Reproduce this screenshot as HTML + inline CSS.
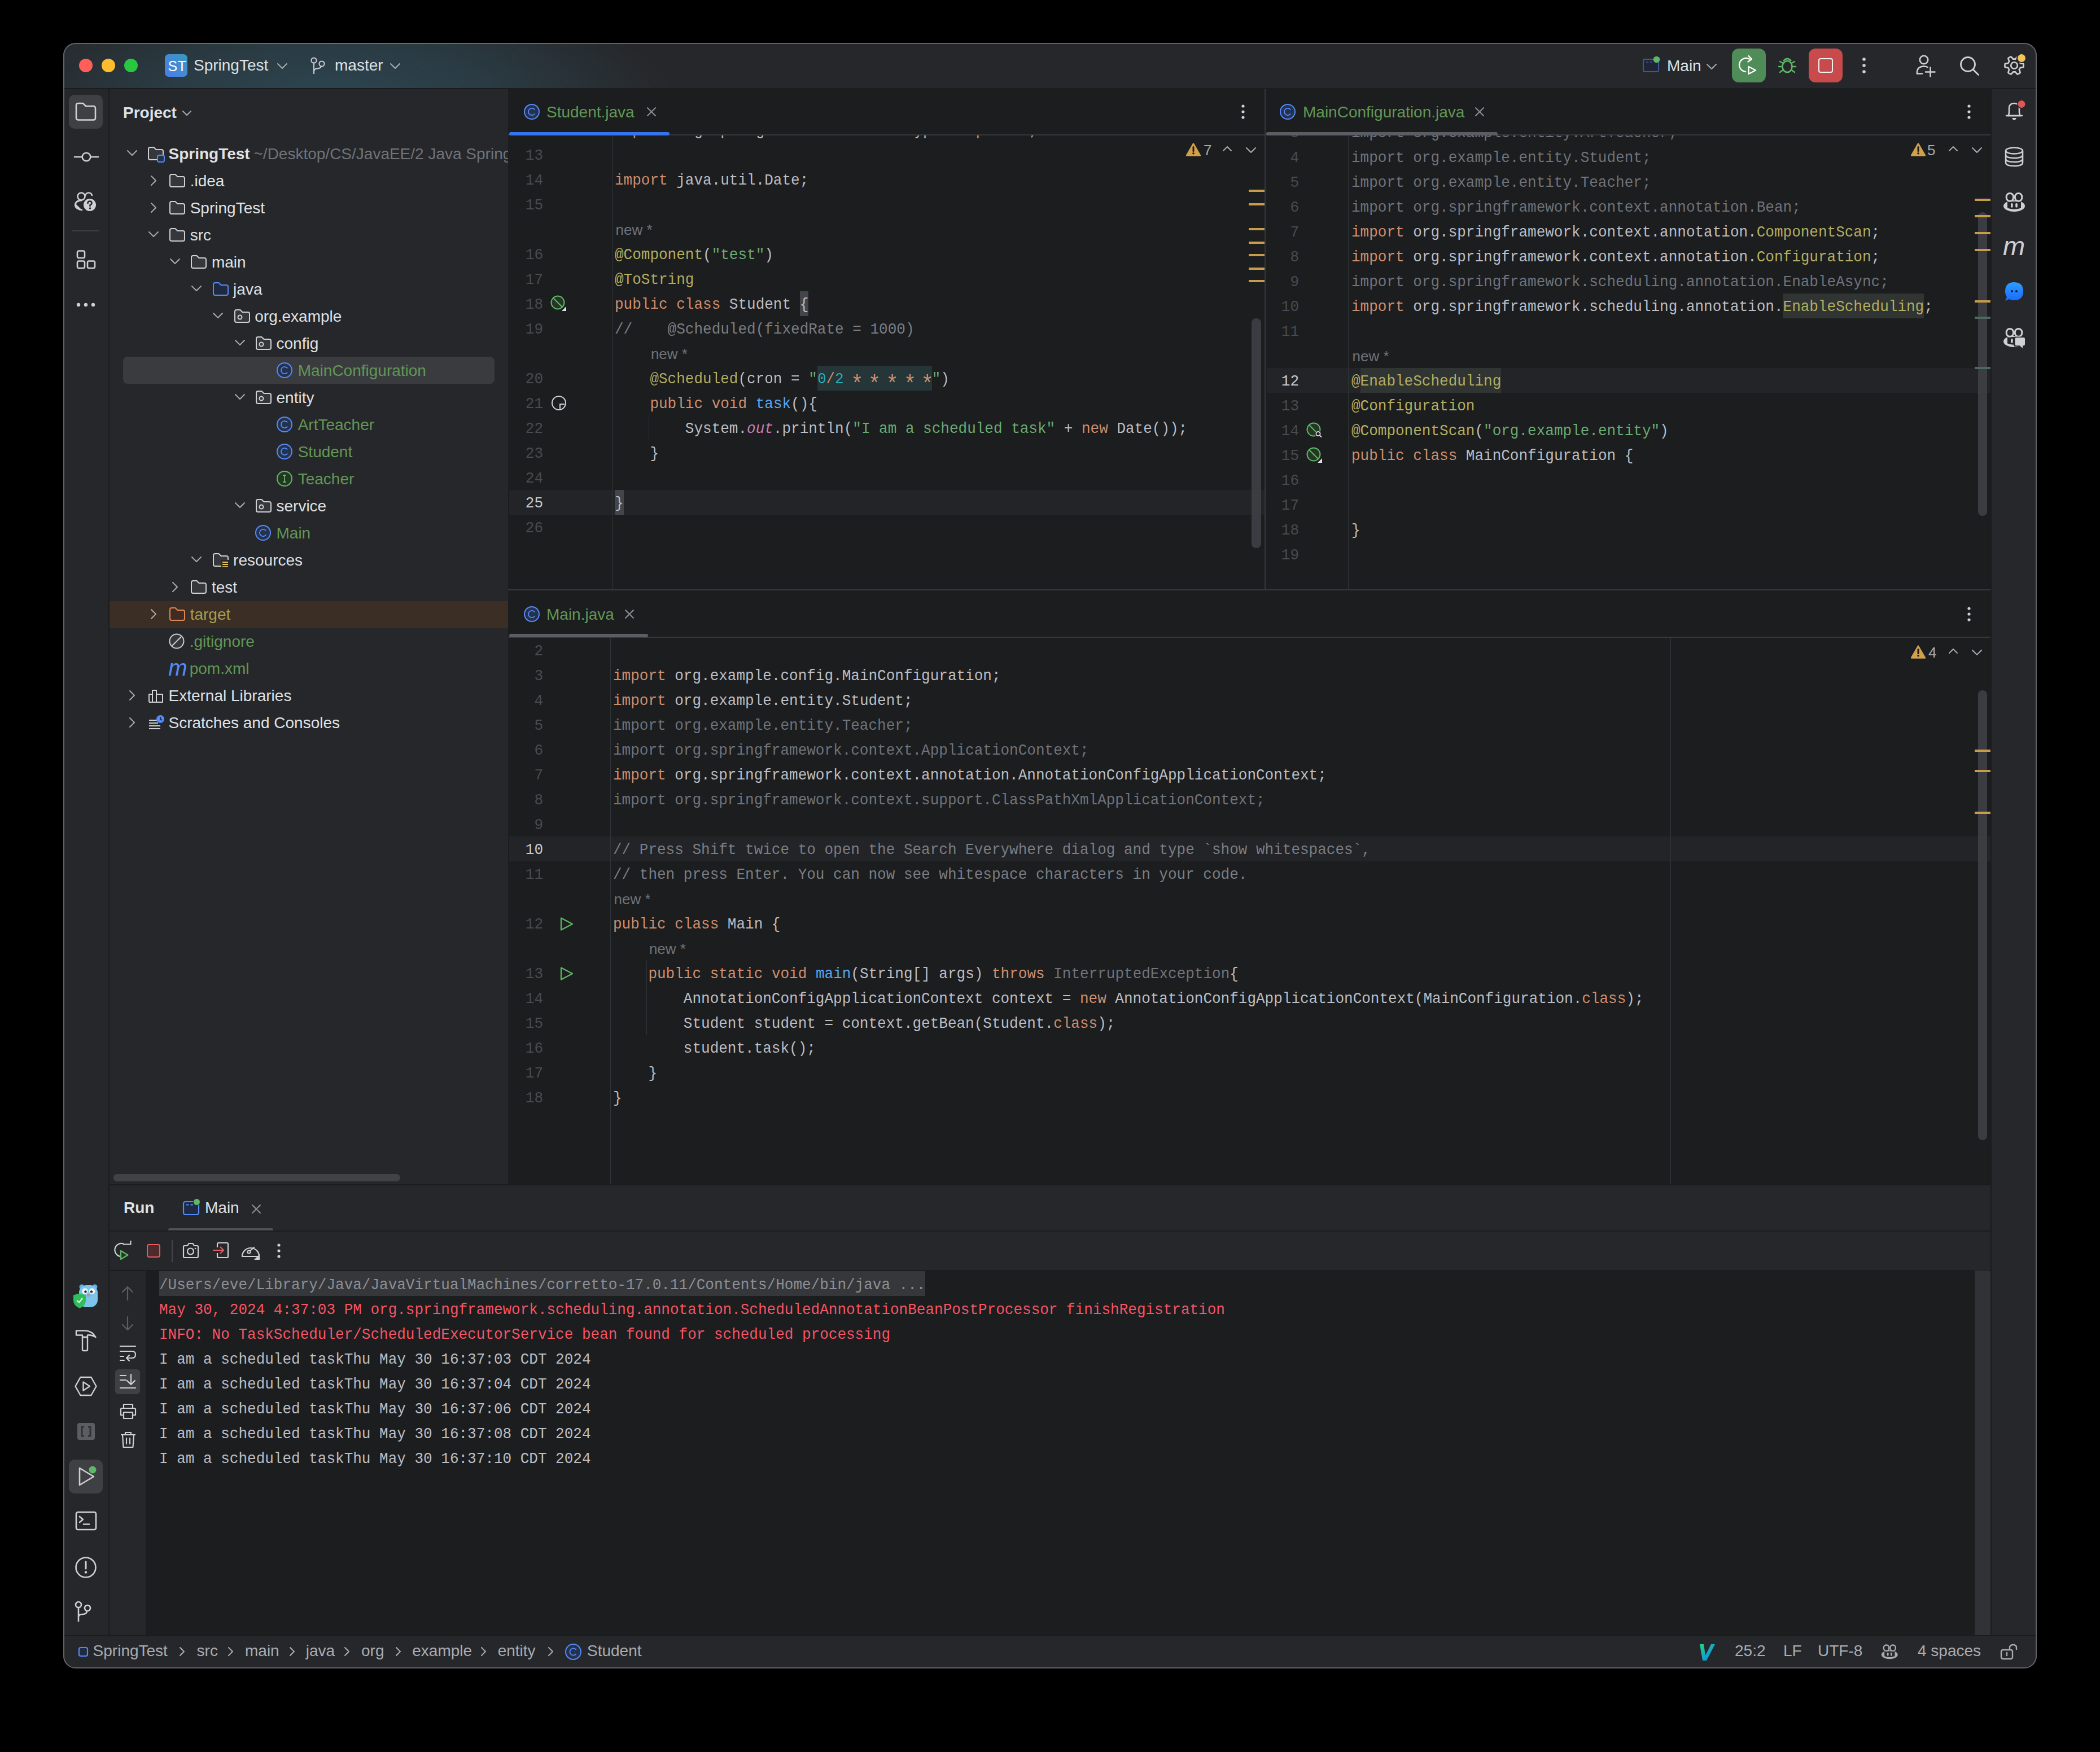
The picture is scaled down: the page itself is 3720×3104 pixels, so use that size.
<!DOCTYPE html><html><head><meta charset="utf-8"><style>
html,body{margin:0;padding:0;background:#000;width:3720px;height:3104px;overflow:hidden}
.cl{position:absolute;font:28px/30px 'Liberation Mono', monospace;white-space:pre;transform:scaleX(0.928571);transform-origin:0 0} .lnr{position:absolute;font:28px/30px 'Liberation Mono', monospace;white-space:pre;transform:scaleX(0.928571);transform-origin:100% 0;text-align:right}
.k{color:#CF8E6D} .s{color:#6AAB73} .a{color:#B3AE60} .f{color:#56A8F5}
.st{color:#C77DBB;font-style:italic} .c{color:#7A7E85} .g{color:#6F737A} .d{color:#BCBEC4}
.n{color:#2AACB8} .ast{color:#CF8E6D;display:inline-block;width:1ch;transform:translateY(11px) scale(1.45)} .hb{background:#43454A} .hs{background:#1F3133} .ha{color:#B3AE60;background:#373936}
</style></head><body>
<div style="position:absolute;left:112px;top:76px;width:3496px;height:2880px;border-radius:22px;background:#26272A;overflow:hidden;">
<div style="position:absolute;left:-112px;top:-76px;width:3720px;height:3104px">
<div style="position:absolute;left:112px;top:76px;width:3496px;height:80px;background:radial-gradient(ellipse 620px 250px at 470px 125px, #2D4753 0%, #2A3B43 50%, #26272A 100%)"></div>
<div style="position:absolute;left:112px;top:156px;width:3496px;height:2px;background:#1B1C1E"></div>
<div style="position:absolute;left:112px;top:158px;width:81px;height:2739px;background:#26272A"></div>
<div style="position:absolute;left:192px;top:158px;width:2px;height:2739px;background:#1B1C1E"></div>
<div style="position:absolute;left:194px;top:158px;width:706px;height:1941px;background:#26272A"></div>
<div style="position:absolute;left:900px;top:158px;width:2626px;height:1941px;background:#1C1D1F"></div>
<div style="position:absolute;left:3526px;top:158px;width:82px;height:2739px;background:#26272A"></div>
<div style="position:absolute;left:3526px;top:158px;width:2px;height:2739px;background:#1B1C1E"></div>
<div style="position:absolute;left:194px;top:2099px;width:3332px;height:798px;background:#26272A"></div>
<div style="position:absolute;left:194px;top:2099px;width:3332px;height:1px;background:#1B1C1E"></div>
<div style="position:absolute;left:112px;top:2897px;width:3496px;height:59px;background:#26272A"></div>
<div style="position:absolute;left:112px;top:2897px;width:3496px;height:2px;background:#1B1C1E"></div>
<div style="position:absolute;left:218px;top:183.66px;font:bold 28px/32.20px 'Liberation Sans', sans-serif;color:#DFE1E5;white-space:pre;"><span style="line-height:normal">Project</span></div>
<svg style="position:absolute;left:322.0px;top:194.5px;" width="18" height="11" viewBox="0 0 18 11"><path d="M2,2 L9.0,9 L16,2" fill="none" stroke="#A8ABB0" stroke-width="2" stroke-linecap="round" stroke-linejoin="round"/></svg>
<div style="position:absolute;left:218px;top:632px;width:658px;height:48px;background:#3A3B3F;border-radius:8px"></div>
<div style="position:absolute;left:194px;top:1065px;width:706px;height:48px;background:#3A2E25"></div>
<svg style="position:absolute;left:223.5px;top:265.0px;" width="20" height="12" viewBox="0 0 20 12"><path d="M2,2 L10.0,10 L18,2" fill="none" stroke="#A8ABB0" stroke-width="2" stroke-linecap="round" stroke-linejoin="round"/></svg>
<svg style="position:absolute;left:262.0px;top:260px;" width="32" height="30" viewBox="0 0 32 30"><path d="M1,4 Q1,1 4,1 H10.5 L14.5,5 H24 Q27,5 27,8 V20 Q27,23 24,23 H4 Q1,23 1,20 Z" fill="#36373B" stroke="#CED0D6" stroke-width="2" stroke-linejoin="round"/><rect x="17" y="15" width="12" height="12" rx="3" fill="#25324D" stroke="#548AF7" stroke-width="2"/></svg>
<div style="position:absolute;left:298.5px;top:256.96px;font:bold 28px/32.20px 'Liberation Sans', sans-serif;color:#DFE1E5;white-space:pre;"><span style="line-height:normal">SpringTest</span></div>
<div style="position:absolute;left:449.5px;top:256.96px;font:normal 28px/32.20px 'Liberation Sans', sans-serif;color:#6F737A;white-space:pre;"><span style="line-height:normal">~/Desktop/CS/JavaEE/2 Java Spring/SpringTest</span></div>
<svg style="position:absolute;left:265.7px;top:310.0px;" width="12" height="20" viewBox="0 0 12 20"><path d="M2,2 L10,10.0 L2,18" fill="none" stroke="#A8ABB0" stroke-width="2" stroke-linecap="round" stroke-linejoin="round"/></svg>
<svg style="position:absolute;left:300.2px;top:308px;" width="28" height="24" viewBox="0 0 28 24"><path d="M1,4 Q1,1 4,1 H10.5 L14.5,5 H24 Q27,5 27,8 V20 Q27,23 24,23 H4 Q1,23 1,20 Z" fill="#36373B" stroke="#CED0D6" stroke-width="2" stroke-linejoin="round"/></svg>
<div style="position:absolute;left:336.7px;top:304.96px;font:normal 28px/32.20px 'Liberation Sans', sans-serif;color:#DFE1E5;white-space:pre;"><span style="line-height:normal">.idea</span></div>
<svg style="position:absolute;left:265.7px;top:358.0px;" width="12" height="20" viewBox="0 0 12 20"><path d="M2,2 L10,10.0 L2,18" fill="none" stroke="#A8ABB0" stroke-width="2" stroke-linecap="round" stroke-linejoin="round"/></svg>
<svg style="position:absolute;left:300.2px;top:356px;" width="28" height="24" viewBox="0 0 28 24"><path d="M1,4 Q1,1 4,1 H10.5 L14.5,5 H24 Q27,5 27,8 V20 Q27,23 24,23 H4 Q1,23 1,20 Z" fill="#36373B" stroke="#CED0D6" stroke-width="2" stroke-linejoin="round"/></svg>
<div style="position:absolute;left:336.7px;top:352.96px;font:normal 28px/32.20px 'Liberation Sans', sans-serif;color:#DFE1E5;white-space:pre;"><span style="line-height:normal">SpringTest</span></div>
<svg style="position:absolute;left:261.7px;top:409.0px;" width="20" height="12" viewBox="0 0 20 12"><path d="M2,2 L10.0,10 L18,2" fill="none" stroke="#A8ABB0" stroke-width="2" stroke-linecap="round" stroke-linejoin="round"/></svg>
<svg style="position:absolute;left:300.2px;top:404px;" width="28" height="24" viewBox="0 0 28 24"><path d="M1,4 Q1,1 4,1 H10.5 L14.5,5 H24 Q27,5 27,8 V20 Q27,23 24,23 H4 Q1,23 1,20 Z" fill="#36373B" stroke="#CED0D6" stroke-width="2" stroke-linejoin="round"/></svg>
<div style="position:absolute;left:336.7px;top:400.96px;font:normal 28px/32.20px 'Liberation Sans', sans-serif;color:#DFE1E5;white-space:pre;"><span style="line-height:normal">src</span></div>
<svg style="position:absolute;left:299.9px;top:457.0px;" width="20" height="12" viewBox="0 0 20 12"><path d="M2,2 L10.0,10 L18,2" fill="none" stroke="#A8ABB0" stroke-width="2" stroke-linecap="round" stroke-linejoin="round"/></svg>
<svg style="position:absolute;left:338.4px;top:452px;" width="28" height="24" viewBox="0 0 28 24"><path d="M1,4 Q1,1 4,1 H10.5 L14.5,5 H24 Q27,5 27,8 V20 Q27,23 24,23 H4 Q1,23 1,20 Z" fill="#36373B" stroke="#CED0D6" stroke-width="2" stroke-linejoin="round"/></svg>
<div style="position:absolute;left:374.9px;top:448.96px;font:normal 28px/32.20px 'Liberation Sans', sans-serif;color:#DFE1E5;white-space:pre;"><span style="line-height:normal">main</span></div>
<svg style="position:absolute;left:338.1px;top:505.0px;" width="20" height="12" viewBox="0 0 20 12"><path d="M2,2 L10.0,10 L18,2" fill="none" stroke="#A8ABB0" stroke-width="2" stroke-linecap="round" stroke-linejoin="round"/></svg>
<svg style="position:absolute;left:376.6px;top:500px;" width="28" height="24" viewBox="0 0 28 24"><path d="M1,4 Q1,1 4,1 H10.5 L14.5,5 H24 Q27,5 27,8 V20 Q27,23 24,23 H4 Q1,23 1,20 Z" fill="#1F2A40" stroke="#548AF7" stroke-width="2" stroke-linejoin="round"/></svg>
<div style="position:absolute;left:413.1px;top:496.96px;font:normal 28px/32.20px 'Liberation Sans', sans-serif;color:#DFE1E5;white-space:pre;"><span style="line-height:normal">java</span></div>
<svg style="position:absolute;left:376.3px;top:553.0px;" width="20" height="12" viewBox="0 0 20 12"><path d="M2,2 L10.0,10 L18,2" fill="none" stroke="#A8ABB0" stroke-width="2" stroke-linecap="round" stroke-linejoin="round"/></svg>
<svg style="position:absolute;left:414.8px;top:548px;" width="28" height="24" viewBox="0 0 28 24"><path d="M1,4 Q1,1 4,1 H10.5 L14.5,5 H24 Q27,5 27,8 V20 Q27,23 24,23 H4 Q1,23 1,20 Z" fill="#36373B" stroke="#CED0D6" stroke-width="2" stroke-linejoin="round"/><circle cx="10" cy="14" r="3.5" fill="none" stroke="#CED0D6" stroke-width="2"/></svg>
<div style="position:absolute;left:451.3px;top:544.96px;font:normal 28px/32.20px 'Liberation Sans', sans-serif;color:#DFE1E5;white-space:pre;"><span style="line-height:normal">org.example</span></div>
<svg style="position:absolute;left:414.5px;top:601.0px;" width="20" height="12" viewBox="0 0 20 12"><path d="M2,2 L10.0,10 L18,2" fill="none" stroke="#A8ABB0" stroke-width="2" stroke-linecap="round" stroke-linejoin="round"/></svg>
<svg style="position:absolute;left:453.0px;top:596px;" width="28" height="24" viewBox="0 0 28 24"><path d="M1,4 Q1,1 4,1 H10.5 L14.5,5 H24 Q27,5 27,8 V20 Q27,23 24,23 H4 Q1,23 1,20 Z" fill="#36373B" stroke="#CED0D6" stroke-width="2" stroke-linejoin="round"/><circle cx="10" cy="14" r="3.5" fill="none" stroke="#CED0D6" stroke-width="2"/></svg>
<div style="position:absolute;left:489.5px;top:592.96px;font:normal 28px/32.20px 'Liberation Sans', sans-serif;color:#DFE1E5;white-space:pre;"><span style="line-height:normal">config</span></div>
<svg style="position:absolute;left:490.20000000000005px;top:642px;" width="28" height="28" viewBox="0 0 28 28"><circle cx="14.0" cy="14.0" r="13.0" fill="#25324D" stroke="#548AF7" stroke-width="2"/><path d="M19.2,10.4 A6.2,6.2 0 1 0 19.2,17.6" fill="none" stroke="#548AF7" stroke-width="1.8"/></svg>
<div style="position:absolute;left:527.7px;top:640.96px;font:normal 28px/32.20px 'Liberation Sans', sans-serif;color:#629755;white-space:pre;"><span style="line-height:normal">MainConfiguration</span></div>
<svg style="position:absolute;left:414.5px;top:697.0px;" width="20" height="12" viewBox="0 0 20 12"><path d="M2,2 L10.0,10 L18,2" fill="none" stroke="#A8ABB0" stroke-width="2" stroke-linecap="round" stroke-linejoin="round"/></svg>
<svg style="position:absolute;left:453.0px;top:692px;" width="28" height="24" viewBox="0 0 28 24"><path d="M1,4 Q1,1 4,1 H10.5 L14.5,5 H24 Q27,5 27,8 V20 Q27,23 24,23 H4 Q1,23 1,20 Z" fill="#36373B" stroke="#CED0D6" stroke-width="2" stroke-linejoin="round"/><circle cx="10" cy="14" r="3.5" fill="none" stroke="#CED0D6" stroke-width="2"/></svg>
<div style="position:absolute;left:489.5px;top:688.96px;font:normal 28px/32.20px 'Liberation Sans', sans-serif;color:#DFE1E5;white-space:pre;"><span style="line-height:normal">entity</span></div>
<svg style="position:absolute;left:490.20000000000005px;top:738px;" width="28" height="28" viewBox="0 0 28 28"><circle cx="14.0" cy="14.0" r="13.0" fill="#25324D" stroke="#548AF7" stroke-width="2"/><path d="M19.2,10.4 A6.2,6.2 0 1 0 19.2,17.6" fill="none" stroke="#548AF7" stroke-width="1.8"/></svg>
<div style="position:absolute;left:527.7px;top:736.96px;font:normal 28px/32.20px 'Liberation Sans', sans-serif;color:#629755;white-space:pre;"><span style="line-height:normal">ArtTeacher</span></div>
<svg style="position:absolute;left:490.20000000000005px;top:786px;" width="28" height="28" viewBox="0 0 28 28"><circle cx="14.0" cy="14.0" r="13.0" fill="#25324D" stroke="#548AF7" stroke-width="2"/><path d="M19.2,10.4 A6.2,6.2 0 1 0 19.2,17.6" fill="none" stroke="#548AF7" stroke-width="1.8"/></svg>
<div style="position:absolute;left:527.7px;top:784.96px;font:normal 28px/32.20px 'Liberation Sans', sans-serif;color:#629755;white-space:pre;"><span style="line-height:normal">Student</span></div>
<svg style="position:absolute;left:490.20000000000005px;top:834px;" width="28" height="28" viewBox="0 0 28 28"><circle cx="14.0" cy="14.0" r="13.0" fill="#253627" stroke="#5FB865" stroke-width="2"/><path d="M14.0,8.0 V20.0 M11.0,8.0 H17.0 M11.0,20.0 H17.0" fill="none" stroke="#5FB865" stroke-width="1.8"/></svg>
<div style="position:absolute;left:527.7px;top:832.96px;font:normal 28px/32.20px 'Liberation Sans', sans-serif;color:#629755;white-space:pre;"><span style="line-height:normal">Teacher</span></div>
<svg style="position:absolute;left:414.5px;top:889.0px;" width="20" height="12" viewBox="0 0 20 12"><path d="M2,2 L10.0,10 L18,2" fill="none" stroke="#A8ABB0" stroke-width="2" stroke-linecap="round" stroke-linejoin="round"/></svg>
<svg style="position:absolute;left:453.0px;top:884px;" width="28" height="24" viewBox="0 0 28 24"><path d="M1,4 Q1,1 4,1 H10.5 L14.5,5 H24 Q27,5 27,8 V20 Q27,23 24,23 H4 Q1,23 1,20 Z" fill="#36373B" stroke="#CED0D6" stroke-width="2" stroke-linejoin="round"/><circle cx="10" cy="14" r="3.5" fill="none" stroke="#CED0D6" stroke-width="2"/></svg>
<div style="position:absolute;left:489.5px;top:880.96px;font:normal 28px/32.20px 'Liberation Sans', sans-serif;color:#DFE1E5;white-space:pre;"><span style="line-height:normal">service</span></div>
<svg style="position:absolute;left:452.0px;top:930px;" width="28" height="28" viewBox="0 0 28 28"><circle cx="14.0" cy="14.0" r="13.0" fill="#25324D" stroke="#548AF7" stroke-width="2"/><path d="M19.2,10.4 A6.2,6.2 0 1 0 19.2,17.6" fill="none" stroke="#548AF7" stroke-width="1.8"/></svg>
<div style="position:absolute;left:489.5px;top:928.96px;font:normal 28px/32.20px 'Liberation Sans', sans-serif;color:#629755;white-space:pre;"><span style="line-height:normal">Main</span></div>
<svg style="position:absolute;left:338.1px;top:985.0px;" width="20" height="12" viewBox="0 0 20 12"><path d="M2,2 L10.0,10 L18,2" fill="none" stroke="#A8ABB0" stroke-width="2" stroke-linecap="round" stroke-linejoin="round"/></svg>
<svg style="position:absolute;left:376.6px;top:980px;" width="28" height="24" viewBox="0 0 28 24"><path d="M1,4 Q1,1 4,1 H10.5 L14.5,5 H24 Q27,5 27,8 V20 Q27,23 24,23 H4 Q1,23 1,20 Z" fill="#36373B" stroke="#CED0D6" stroke-width="2" stroke-linejoin="round"/><rect x="15" y="12" width="13" height="14" fill="#26272A"/><path d="M17,16 H27 M17,20 H27 M17,24 H27" stroke="#F2C55C" stroke-width="2"/></svg>
<div style="position:absolute;left:413.1px;top:976.96px;font:normal 28px/32.20px 'Liberation Sans', sans-serif;color:#DFE1E5;white-space:pre;"><span style="line-height:normal">resources</span></div>
<svg style="position:absolute;left:303.9px;top:1030.0px;" width="12" height="20" viewBox="0 0 12 20"><path d="M2,2 L10,10.0 L2,18" fill="none" stroke="#A8ABB0" stroke-width="2" stroke-linecap="round" stroke-linejoin="round"/></svg>
<svg style="position:absolute;left:338.4px;top:1028px;" width="28" height="24" viewBox="0 0 28 24"><path d="M1,4 Q1,1 4,1 H10.5 L14.5,5 H24 Q27,5 27,8 V20 Q27,23 24,23 H4 Q1,23 1,20 Z" fill="#36373B" stroke="#CED0D6" stroke-width="2" stroke-linejoin="round"/></svg>
<div style="position:absolute;left:374.9px;top:1024.96px;font:normal 28px/32.20px 'Liberation Sans', sans-serif;color:#DFE1E5;white-space:pre;"><span style="line-height:normal">test</span></div>
<svg style="position:absolute;left:265.7px;top:1078.0px;" width="12" height="20" viewBox="0 0 12 20"><path d="M2,2 L10,10.0 L2,18" fill="none" stroke="#A8ABB0" stroke-width="2" stroke-linecap="round" stroke-linejoin="round"/></svg>
<svg style="position:absolute;left:300.2px;top:1076px;" width="28" height="24" viewBox="0 0 28 24"><path d="M1,4 Q1,1 4,1 H10.5 L14.5,5 H24 Q27,5 27,8 V20 Q27,23 24,23 H4 Q1,23 1,20 Z" fill="#3D2C25" stroke="#E08855" stroke-width="2" stroke-linejoin="round"/></svg>
<div style="position:absolute;left:336.7px;top:1072.96px;font:normal 28px/32.20px 'Liberation Sans', sans-serif;color:#A69E4E;white-space:pre;"><span style="line-height:normal">target</span></div>
<svg style="position:absolute;left:299.2px;top:1122px;" width="28" height="28" viewBox="0 0 28 28"><circle cx="14" cy="14" r="12.5" fill="#36373B" stroke="#CED0D6" stroke-width="2"/><path d="M6,22 L22,6" stroke="#CED0D6" stroke-width="2"/></svg>
<div style="position:absolute;left:335.7px;top:1120.96px;font:normal 28px/32.20px 'Liberation Sans', sans-serif;color:#629755;white-space:pre;"><span style="line-height:normal">.gitignore</span></div>
<div style="position:absolute;left:298.2px;top:1159px;font:italic 40px/48px 'Liberation Sans', sans-serif;color:#548AF7;letter-spacing:-2px">m</div>
<div style="position:absolute;left:335.7px;top:1168.96px;font:normal 28px/32.20px 'Liberation Sans', sans-serif;color:#629755;white-space:pre;"><span style="line-height:normal">pom.xml</span></div>
<svg style="position:absolute;left:227.5px;top:1222.0px;" width="12" height="20" viewBox="0 0 12 20"><path d="M2,2 L10,10.0 L2,18" fill="none" stroke="#A8ABB0" stroke-width="2" stroke-linecap="round" stroke-linejoin="round"/></svg>
<svg style="position:absolute;left:262.0px;top:1220px;" width="28" height="26" viewBox="0 0 28 26"><path d="M2,24 V10 H8 V24 M8,24 V3 H15 V24 M15,24 V10 H26 V24 Z M2,24 H26" fill="none" stroke="#CED0D6" stroke-width="2" stroke-linejoin="round"/></svg>
<div style="position:absolute;left:298.5px;top:1216.96px;font:normal 28px/32.20px 'Liberation Sans', sans-serif;color:#DFE1E5;white-space:pre;"><span style="line-height:normal">External Libraries</span></div>
<svg style="position:absolute;left:227.5px;top:1270.0px;" width="12" height="20" viewBox="0 0 12 20"><path d="M2,2 L10,10.0 L2,18" fill="none" stroke="#A8ABB0" stroke-width="2" stroke-linecap="round" stroke-linejoin="round"/></svg>
<svg style="position:absolute;left:262.0px;top:1266px;" width="30" height="28" viewBox="0 0 30 28"><path d="M2,10 H16 M2,15 H18 M2,20 H22 M2,25 H22" stroke="#CED0D6" stroke-width="2"/><circle cx="22" cy="8" r="7" fill="#548AF7"/><path d="M22,4 V8 L25,10" stroke="#1C1D1F" stroke-width="1.6" fill="none"/></svg>
<div style="position:absolute;left:298.5px;top:1264.96px;font:normal 28px/32.20px 'Liberation Sans', sans-serif;color:#DFE1E5;white-space:pre;"><span style="line-height:normal">Scratches and Consoles</span></div>
<div style="position:absolute;left:900px;top:158px;width:2626px;height:1941px;background:#1C1D1F"></div>
<div style="position:absolute;left:201px;top:2080px;width:508px;height:13px;background:#4A4C50;border-radius:7px;opacity:0.75"></div>
<div style="position:absolute;left:900px;top:240px;width:1340px;height:804px;overflow:hidden;background:#1C1D1F"><div style="position:absolute;left:-900px;top:-240px;width:3720px;height:3104px">
<div style="position:absolute;left:902px;top:868px;width:1338px;height:44px;background:#232427"></div>
<div style="position:absolute;left:1085px;top:240px;width:1px;height:804px;background:#313438"></div>
<div style="position:absolute;left:1149px;top:736px;width:1px;height:44px;background:#313438"></div>
<div style="position:absolute;left:1417px;top:516px;width:15px;height:44px;background:#43454A"></div>
<div style="position:absolute;left:1448px;top:648px;width:203px;height:44px;background:#253538"></div>
<div style="position:absolute;left:1089px;top:868px;width:16px;height:44px;background:#43454A"></div>
<div class="lnr" style="left:762px;width:200px;top:217.34px;color:#484B50">12</div>
<div class="cl" style="left:1089px;top:217.34px;color:#BCBEC4"><span class="k">import</span> org.springframework.stereotype.<span class="a">Component</span>;</div>
<div class="lnr" style="left:762px;width:200px;top:261.34px;color:#484B50">13</div>
<div class="lnr" style="left:762px;width:200px;top:305.34px;color:#484B50">14</div>
<div class="cl" style="left:1089px;top:305.34px;color:#BCBEC4"><span class="k">import</span> java.util.Date;</div>
<div class="lnr" style="left:762px;width:200px;top:349.34px;color:#484B50">15</div>
<div style="position:absolute;left:1090.5px;top:392.47px;font:normal 26px/29.90px 'Liberation Sans', sans-serif;color:#6F737A;white-space:pre;"><span style="line-height:normal">new *</span></div>
<div class="lnr" style="left:762px;width:200px;top:437.34px;color:#484B50">16</div>
<div class="cl" style="left:1089px;top:437.34px;color:#BCBEC4"><span class="a">@Component</span>(<span class="s">&quot;test&quot;</span>)</div>
<div class="lnr" style="left:762px;width:200px;top:481.34px;color:#484B50">17</div>
<div class="cl" style="left:1089px;top:481.34px;color:#BCBEC4"><span class="a">@ToString</span></div>
<div class="lnr" style="left:762px;width:200px;top:525.34px;color:#484B50">18</div>
<div class="cl" style="left:1089px;top:525.34px;color:#BCBEC4"><span class="k">public</span> <span class="k">class</span> Student {</div>
<div class="lnr" style="left:762px;width:200px;top:569.34px;color:#484B50">19</div>
<div class="cl" style="left:1089px;top:569.34px;color:#BCBEC4"><span class="c">//    @Scheduled(fixedRate = 1000)</span></div>
<div style="position:absolute;left:1152.9px;top:612.47px;font:normal 26px/29.90px 'Liberation Sans', sans-serif;color:#6F737A;white-space:pre;"><span style="line-height:normal">new *</span></div>
<div class="lnr" style="left:762px;width:200px;top:657.34px;color:#484B50">20</div>
<div class="cl" style="left:1089px;top:657.34px;color:#BCBEC4">    <span class="a">@Scheduled</span>(cron = <span class="s">&quot;</span><span class="n">0</span><span class="k">/</span><span class="n">2</span> <span class="ast">*</span> <span class="ast">*</span> <span class="ast">*</span> <span class="ast">*</span> <span class="ast">*</span><span class="s">&quot;</span>)</div>
<div class="lnr" style="left:762px;width:200px;top:701.34px;color:#484B50">21</div>
<div class="cl" style="left:1089px;top:701.34px;color:#BCBEC4">    <span class="k">public</span> <span class="k">void</span> <span class="f">task</span>(){</div>
<div class="lnr" style="left:762px;width:200px;top:745.34px;color:#484B50">22</div>
<div class="cl" style="left:1089px;top:745.34px;color:#BCBEC4">        System.<span class="st">out</span>.println(<span class="s">&quot;I am a scheduled task&quot;</span> + <span class="k">new</span> Date());</div>
<div class="lnr" style="left:762px;width:200px;top:789.34px;color:#484B50">23</div>
<div class="cl" style="left:1089px;top:789.34px;color:#BCBEC4">    }</div>
<div class="lnr" style="left:762px;width:200px;top:833.34px;color:#484B50">24</div>
<div class="lnr" style="left:762px;width:200px;top:877.34px;color:#C9CBD0">25</div>
<div class="cl" style="left:1089px;top:877.34px;color:#BCBEC4">}</div>
<div class="lnr" style="left:762px;width:200px;top:921.34px;color:#484B50">26</div>
</div></div>
<div style="position:absolute;left:2242px;top:240px;width:1284px;height:804px;overflow:hidden;background:#1C1D1F"><div style="position:absolute;left:-2242px;top:-240px;width:3720px;height:3104px">
<div style="position:absolute;left:2244px;top:652px;width:1282px;height:44px;background:#232427"></div>
<div style="position:absolute;left:2388px;top:240px;width:1px;height:804px;background:#313438"></div>
<div style="position:absolute;left:3158px;top:520px;width:250px;height:44px;background:#303432"></div>
<div style="position:absolute;left:2410px;top:652px;width:249px;height:44px;background:#303432"></div>
<div class="lnr" style="left:2101px;width:200px;top:221.34px;color:#484B50">3</div>
<div class="cl" style="left:2394px;top:221.34px;color:#BCBEC4"><span class="g">import org.example.entity.ArtTeacher;</span></div>
<div class="lnr" style="left:2101px;width:200px;top:265.34px;color:#484B50">4</div>
<div class="cl" style="left:2394px;top:265.34px;color:#BCBEC4"><span class="g">import org.example.entity.Student;</span></div>
<div class="lnr" style="left:2101px;width:200px;top:309.34px;color:#484B50">5</div>
<div class="cl" style="left:2394px;top:309.34px;color:#BCBEC4"><span class="g">import org.example.entity.Teacher;</span></div>
<div class="lnr" style="left:2101px;width:200px;top:353.34px;color:#484B50">6</div>
<div class="cl" style="left:2394px;top:353.34px;color:#BCBEC4"><span class="g">import org.springframework.context.annotation.Bean;</span></div>
<div class="lnr" style="left:2101px;width:200px;top:397.34px;color:#484B50">7</div>
<div class="cl" style="left:2394px;top:397.34px;color:#BCBEC4"><span class="k">import</span> org.springframework.context.annotation.<span class="a">ComponentScan</span>;</div>
<div class="lnr" style="left:2101px;width:200px;top:441.34px;color:#484B50">8</div>
<div class="cl" style="left:2394px;top:441.34px;color:#BCBEC4"><span class="k">import</span> org.springframework.context.annotation.<span class="a">Configuration</span>;</div>
<div class="lnr" style="left:2101px;width:200px;top:485.34px;color:#484B50">9</div>
<div class="cl" style="left:2394px;top:485.34px;color:#BCBEC4"><span class="g">import org.springframework.scheduling.annotation.EnableAsync;</span></div>
<div class="lnr" style="left:2101px;width:200px;top:529.34px;color:#484B50">10</div>
<div class="cl" style="left:2394px;top:529.34px;color:#BCBEC4"><span class="k">import</span> org.springframework.scheduling.annotation.<span class="a">EnableScheduling</span>;</div>
<div class="lnr" style="left:2101px;width:200px;top:573.34px;color:#484B50">11</div>
<div style="position:absolute;left:2395.5px;top:616.47px;font:normal 26px/29.90px 'Liberation Sans', sans-serif;color:#6F737A;white-space:pre;"><span style="line-height:normal">new *</span></div>
<div class="lnr" style="left:2101px;width:200px;top:661.34px;color:#C9CBD0">12</div>
<div class="cl" style="left:2394px;top:661.34px;color:#BCBEC4"><span class="a">@EnableScheduling</span></div>
<div class="lnr" style="left:2101px;width:200px;top:705.34px;color:#484B50">13</div>
<div class="cl" style="left:2394px;top:705.34px;color:#BCBEC4"><span class="a">@Configuration</span></div>
<div class="lnr" style="left:2101px;width:200px;top:749.34px;color:#484B50">14</div>
<div class="cl" style="left:2394px;top:749.34px;color:#BCBEC4"><span class="a">@ComponentScan</span>(<span class="s">&quot;org.example.entity&quot;</span>)</div>
<div class="lnr" style="left:2101px;width:200px;top:793.34px;color:#484B50">15</div>
<div class="cl" style="left:2394px;top:793.34px;color:#BCBEC4"><span class="k">public</span> <span class="k">class</span> MainConfiguration {</div>
<div class="lnr" style="left:2101px;width:200px;top:837.34px;color:#484B50">16</div>
<div class="lnr" style="left:2101px;width:200px;top:881.34px;color:#484B50">17</div>
<div class="lnr" style="left:2101px;width:200px;top:925.34px;color:#484B50">18</div>
<div class="cl" style="left:2394px;top:925.34px;color:#BCBEC4">}</div>
<div class="lnr" style="left:2101px;width:200px;top:969.34px;color:#484B50">19</div>
</div></div>
<div style="position:absolute;left:900px;top:1130px;width:2626px;height:969px;overflow:hidden;background:#1C1D1F"><div style="position:absolute;left:-900px;top:-1130px;width:3720px;height:3104px">
<div style="position:absolute;left:902px;top:1482px;width:2624px;height:44px;background:#232427"></div>
<div style="position:absolute;left:1081px;top:1130px;width:1px;height:969px;background:#313438"></div>
<div style="position:absolute;left:1145px;top:1702px;width:1px;height:132px;background:#313438"></div>
<div class="lnr" style="left:762px;width:200px;top:1139.34px;color:#484B50">2</div>
<div class="lnr" style="left:762px;width:200px;top:1183.34px;color:#484B50">3</div>
<div class="cl" style="left:1086px;top:1183.34px;color:#BCBEC4"><span class="k">import</span> org.example.config.MainConfiguration;</div>
<div class="lnr" style="left:762px;width:200px;top:1227.34px;color:#484B50">4</div>
<div class="cl" style="left:1086px;top:1227.34px;color:#BCBEC4"><span class="k">import</span> org.example.entity.Student;</div>
<div class="lnr" style="left:762px;width:200px;top:1271.34px;color:#484B50">5</div>
<div class="cl" style="left:1086px;top:1271.34px;color:#BCBEC4"><span class="g">import org.example.entity.Teacher;</span></div>
<div class="lnr" style="left:762px;width:200px;top:1315.34px;color:#484B50">6</div>
<div class="cl" style="left:1086px;top:1315.34px;color:#BCBEC4"><span class="g">import org.springframework.context.ApplicationContext;</span></div>
<div class="lnr" style="left:762px;width:200px;top:1359.34px;color:#484B50">7</div>
<div class="cl" style="left:1086px;top:1359.34px;color:#BCBEC4"><span class="k">import</span> org.springframework.context.annotation.AnnotationConfigApplicationContext;</div>
<div class="lnr" style="left:762px;width:200px;top:1403.34px;color:#484B50">8</div>
<div class="cl" style="left:1086px;top:1403.34px;color:#BCBEC4"><span class="g">import org.springframework.context.support.ClassPathXmlApplicationContext;</span></div>
<div class="lnr" style="left:762px;width:200px;top:1447.34px;color:#484B50">9</div>
<div class="lnr" style="left:762px;width:200px;top:1491.34px;color:#C9CBD0">10</div>
<div class="cl" style="left:1086px;top:1491.34px;color:#BCBEC4"><span class="c">// Press Shift twice to open the Search Everywhere dialog and type `show whitespaces`,</span></div>
<div class="lnr" style="left:762px;width:200px;top:1535.34px;color:#484B50">11</div>
<div class="cl" style="left:1086px;top:1535.34px;color:#BCBEC4"><span class="c">// then press Enter. You can now see whitespace characters in your code.</span></div>
<div style="position:absolute;left:1087.5px;top:1578.47px;font:normal 26px/29.90px 'Liberation Sans', sans-serif;color:#6F737A;white-space:pre;"><span style="line-height:normal">new *</span></div>
<div class="lnr" style="left:762px;width:200px;top:1623.34px;color:#484B50">12</div>
<div class="cl" style="left:1086px;top:1623.34px;color:#BCBEC4"><span class="k">public</span> <span class="k">class</span> Main {</div>
<div style="position:absolute;left:1149.9px;top:1666.47px;font:normal 26px/29.90px 'Liberation Sans', sans-serif;color:#6F737A;white-space:pre;"><span style="line-height:normal">new *</span></div>
<div class="lnr" style="left:762px;width:200px;top:1711.34px;color:#484B50">13</div>
<div class="cl" style="left:1086px;top:1711.34px;color:#BCBEC4">    <span class="k">public</span> <span class="k">static</span> <span class="k">void</span> <span class="f">main</span>(String[] args) <span class="k">throws</span> <span class="g">InterruptedException</span>{</div>
<div class="lnr" style="left:762px;width:200px;top:1755.34px;color:#484B50">14</div>
<div class="cl" style="left:1086px;top:1755.34px;color:#BCBEC4">        AnnotationConfigApplicationContext context = <span class="k">new</span> AnnotationConfigApplicationContext(MainConfiguration.<span class="k">class</span>);</div>
<div class="lnr" style="left:762px;width:200px;top:1799.34px;color:#484B50">15</div>
<div class="cl" style="left:1086px;top:1799.34px;color:#BCBEC4">        Student student = context.getBean(Student.<span class="k">class</span>);</div>
<div class="lnr" style="left:762px;width:200px;top:1843.34px;color:#484B50">16</div>
<div class="cl" style="left:1086px;top:1843.34px;color:#BCBEC4">        student.task();</div>
<div class="lnr" style="left:762px;width:200px;top:1887.34px;color:#484B50">17</div>
<div class="cl" style="left:1086px;top:1887.34px;color:#BCBEC4">    }</div>
<div class="lnr" style="left:762px;width:200px;top:1931.34px;color:#484B50">18</div>
<div class="cl" style="left:1086px;top:1931.34px;color:#BCBEC4">}</div>
</div></div>
<div style="position:absolute;left:2958px;top:1130px;width:2px;height:969px;background:#2E2F33"></div>
<div style="position:absolute;left:2240px;top:158px;width:2px;height:886px;background:#36373B"></div>
<div style="position:absolute;left:900px;top:1044px;width:2626px;height:2px;background:#36373B"></div>
<div style="position:absolute;left:900px;top:238px;width:2626px;height:2px;background:#36373B"></div>
<div style="position:absolute;left:900px;top:1128px;width:2626px;height:2px;background:#36373B"></div>
<svg style="position:absolute;left:928px;top:184px;" width="28" height="28" viewBox="0 0 28 28"><circle cx="14.0" cy="14.0" r="13.0" fill="#25324D" stroke="#548AF7" stroke-width="2"/><path d="M19.2,10.4 A6.2,6.2 0 1 0 19.2,17.6" fill="none" stroke="#548AF7" stroke-width="1.8"/></svg>
<div style="position:absolute;left:968px;top:182.66px;font:normal 28px/32.20px 'Liberation Sans', sans-serif;color:#629755;white-space:pre;"><span style="line-height:normal">Student.java</span></div>
<svg style="position:absolute;left:1145px;top:189px;" width="18" height="18" viewBox="0 0 18 18"><path d="M2,2 L16,16 M16,2 L2,16" stroke="#8C8F94" stroke-width="2" stroke-linecap="round"/></svg>
<div style="position:absolute;left:902px;top:234px;width:284px;height:6px;background:#3574F0;border-radius:3px"></div>
<svg style="position:absolute;left:2197px;top:183px;" width="10" height="30" viewBox="0 0 10 30"><circle cx="5" cy="5" r="2.6" fill="#CED0D6"/><circle cx="5" cy="15" r="2.6" fill="#CED0D6"/><circle cx="5" cy="25" r="2.6" fill="#CED0D6"/></svg>
<svg style="position:absolute;left:2267px;top:184px;" width="28" height="28" viewBox="0 0 28 28"><circle cx="14.0" cy="14.0" r="13.0" fill="#25324D" stroke="#548AF7" stroke-width="2"/><path d="M19.2,10.4 A6.2,6.2 0 1 0 19.2,17.6" fill="none" stroke="#548AF7" stroke-width="1.8"/></svg>
<div style="position:absolute;left:2308px;top:182.66px;font:normal 28px/32.20px 'Liberation Sans', sans-serif;color:#629755;white-space:pre;"><span style="line-height:normal">MainConfiguration.java</span></div>
<svg style="position:absolute;left:2612px;top:189px;" width="18" height="18" viewBox="0 0 18 18"><path d="M2,2 L16,16 M16,2 L2,16" stroke="#8C8F94" stroke-width="2" stroke-linecap="round"/></svg>
<div style="position:absolute;left:2243px;top:234px;width:410px;height:6px;background:#5A5D63;border-radius:3px"></div>
<svg style="position:absolute;left:3483px;top:183px;" width="10" height="30" viewBox="0 0 10 30"><circle cx="5" cy="5" r="2.6" fill="#CED0D6"/><circle cx="5" cy="15" r="2.6" fill="#CED0D6"/><circle cx="5" cy="25" r="2.6" fill="#CED0D6"/></svg>
<svg style="position:absolute;left:928px;top:1074px;" width="28" height="28" viewBox="0 0 28 28"><circle cx="14.0" cy="14.0" r="13.0" fill="#25324D" stroke="#548AF7" stroke-width="2"/><path d="M19.2,10.4 A6.2,6.2 0 1 0 19.2,17.6" fill="none" stroke="#548AF7" stroke-width="1.8"/></svg>
<div style="position:absolute;left:968px;top:1072.66px;font:normal 28px/32.20px 'Liberation Sans', sans-serif;color:#629755;white-space:pre;"><span style="line-height:normal">Main.java</span></div>
<svg style="position:absolute;left:1106px;top:1079px;" width="18" height="18" viewBox="0 0 18 18"><path d="M2,2 L16,16 M16,2 L2,16" stroke="#8C8F94" stroke-width="2" stroke-linecap="round"/></svg>
<div style="position:absolute;left:902px;top:1123px;width:246px;height:6px;background:#5A5D63;border-radius:3px"></div>
<svg style="position:absolute;left:3483px;top:1073px;" width="10" height="30" viewBox="0 0 10 30"><circle cx="5" cy="5" r="2.6" fill="#CED0D6"/><circle cx="5" cy="15" r="2.6" fill="#CED0D6"/><circle cx="5" cy="25" r="2.6" fill="#CED0D6"/></svg>
<svg style="position:absolute;left:2101px;top:253px;" width="26" height="24" viewBox="0 0 26 24"><path d="M13,1.5 L25,22.5 H1 Z" fill="#D1A04A" stroke="#D1A04A" stroke-width="2.5" stroke-linejoin="round"/><path d="M13,7.5 V14.5" stroke="#1C1D1F" stroke-width="3" stroke-linecap="round"/><circle cx="13" cy="18.8" r="1.8" fill="#1C1D1F"/></svg>
<div style="position:absolute;left:2132px;top:250.97px;font:normal 26px/29.90px 'Liberation Sans', sans-serif;color:#A8ABB0;white-space:pre;"><span style="line-height:normal">7</span></div>
<svg style="position:absolute;left:2165px;top:258px;" width="18" height="12" viewBox="0 0 18 12"><path d="M2,9 L9,2 L16,9" fill="none" stroke="#A8ABB0" stroke-width="2" stroke-linecap="round" stroke-linejoin="round"/></svg>
<svg style="position:absolute;left:2206px;top:260px;" width="20" height="12" viewBox="0 0 20 12"><path d="M2,2 L10,10 L18,2" fill="none" stroke="#A8ABB0" stroke-width="2" stroke-linecap="round" stroke-linejoin="round"/></svg>
<svg style="position:absolute;left:3385px;top:253px;" width="26" height="24" viewBox="0 0 26 24"><path d="M13,1.5 L25,22.5 H1 Z" fill="#D1A04A" stroke="#D1A04A" stroke-width="2.5" stroke-linejoin="round"/><path d="M13,7.5 V14.5" stroke="#1C1D1F" stroke-width="3" stroke-linecap="round"/><circle cx="13" cy="18.8" r="1.8" fill="#1C1D1F"/></svg>
<div style="position:absolute;left:3414px;top:250.97px;font:normal 26px/29.90px 'Liberation Sans', sans-serif;color:#A8ABB0;white-space:pre;"><span style="line-height:normal">5</span></div>
<svg style="position:absolute;left:3451px;top:258px;" width="18" height="12" viewBox="0 0 18 12"><path d="M2,9 L9,2 L16,9" fill="none" stroke="#A8ABB0" stroke-width="2" stroke-linecap="round" stroke-linejoin="round"/></svg>
<svg style="position:absolute;left:3492px;top:260px;" width="20" height="12" viewBox="0 0 20 12"><path d="M2,2 L10,10 L18,2" fill="none" stroke="#A8ABB0" stroke-width="2" stroke-linecap="round" stroke-linejoin="round"/></svg>
<svg style="position:absolute;left:3385px;top:1143px;" width="26" height="24" viewBox="0 0 26 24"><path d="M13,1.5 L25,22.5 H1 Z" fill="#D1A04A" stroke="#D1A04A" stroke-width="2.5" stroke-linejoin="round"/><path d="M13,7.5 V14.5" stroke="#1C1D1F" stroke-width="3" stroke-linecap="round"/><circle cx="13" cy="18.8" r="1.8" fill="#1C1D1F"/></svg>
<div style="position:absolute;left:3416px;top:1140.97px;font:normal 26px/29.90px 'Liberation Sans', sans-serif;color:#A8ABB0;white-space:pre;"><span style="line-height:normal">4</span></div>
<svg style="position:absolute;left:3451px;top:1148px;" width="18" height="12" viewBox="0 0 18 12"><path d="M2,9 L9,2 L16,9" fill="none" stroke="#A8ABB0" stroke-width="2" stroke-linecap="round" stroke-linejoin="round"/></svg>
<svg style="position:absolute;left:3492px;top:1150px;" width="20" height="12" viewBox="0 0 20 12"><path d="M2,2 L10,10 L18,2" fill="none" stroke="#A8ABB0" stroke-width="2" stroke-linecap="round" stroke-linejoin="round"/></svg>
<div style="position:absolute;left:2212px;top:336px;width:28px;height:4px;background:#C99C4B"></div>
<div style="position:absolute;left:2212px;top:360px;width:28px;height:4px;background:#C99C4B"></div>
<div style="position:absolute;left:2212px;top:404px;width:28px;height:4px;background:#C99C4B"></div>
<div style="position:absolute;left:2212px;top:428px;width:28px;height:4px;background:#C99C4B"></div>
<div style="position:absolute;left:2212px;top:450px;width:28px;height:4px;background:#C99C4B"></div>
<div style="position:absolute;left:2212px;top:474px;width:28px;height:4px;background:#C99C4B"></div>
<div style="position:absolute;left:2212px;top:496px;width:28px;height:4px;background:#C99C4B"></div>
<div style="position:absolute;left:2217px;top:564px;width:17px;height:407px;background:#3E4045;border-radius:8px;opacity:0.9"></div>
<div style="position:absolute;left:3504px;top:376px;width:16px;height:538px;background:#3E4045;border-radius:8px;opacity:0.9"></div>
<div style="position:absolute;left:3498px;top:352px;width:28px;height:4px;background:#C99C4B"></div>
<div style="position:absolute;left:3498px;top:381px;width:28px;height:4px;background:#C99C4B"></div>
<div style="position:absolute;left:3498px;top:411px;width:28px;height:4px;background:#C99C4B"></div>
<div style="position:absolute;left:3498px;top:441px;width:28px;height:4px;background:#C99C4B"></div>
<div style="position:absolute;left:3498px;top:532px;width:28px;height:4px;background:#C99C4B"></div>
<div style="position:absolute;left:3498px;top:650px;width:28px;height:4px;background:#4D6B5C"></div>
<div style="position:absolute;left:3498px;top:561px;width:28px;height:4px;background:#4D6B5C"></div>
<div style="position:absolute;left:3504px;top:1223px;width:16px;height:797px;background:#3E4045;border-radius:8px;opacity:0.9"></div>
<div style="position:absolute;left:3498px;top:1328px;width:28px;height:4px;background:#C99C4B"></div>
<div style="position:absolute;left:3498px;top:1364px;width:28px;height:4px;background:#C99C4B"></div>
<div style="position:absolute;left:3498px;top:1438px;width:28px;height:4px;background:#C99C4B"></div>
<svg style="position:absolute;left:974px;top:522px;" width="30" height="30" viewBox="0 0 30 30"><circle cx="14" cy="14" r="11.5" fill="#253627" stroke="#5FB865" stroke-width="2"/><path d="M6,6 L22,22" stroke="#5FB865" stroke-width="2"/><path d="M29,21 V29 H21 Z" fill="#DFE1E5"/></svg>
<svg style="position:absolute;left:2313px;top:747px;" width="30" height="30" viewBox="0 0 30 30"><circle cx="14" cy="14" r="11.5" fill="#253627" stroke="#5FB865" stroke-width="2"/><path d="M6,6 L22,22" stroke="#5FB865" stroke-width="2"/><circle cx="22" cy="22" r="5.5" fill="#1C1D1F"/><circle cx="22" cy="21.5" r="3.6" fill="none" stroke="#DFE1E5" stroke-width="1.8"/><path d="M24.5,24 L28,27.5" stroke="#DFE1E5" stroke-width="1.8"/></svg>
<svg style="position:absolute;left:2313px;top:791px;" width="30" height="30" viewBox="0 0 30 30"><circle cx="14" cy="14" r="11.5" fill="#253627" stroke="#5FB865" stroke-width="2"/><path d="M6,6 L22,22" stroke="#5FB865" stroke-width="2"/><path d="M29,21 V29 H21 Z" fill="#DFE1E5"/></svg>
<svg style="position:absolute;left:976px;top:700px;" width="28" height="28" viewBox="0 0 28 28"><circle cx="14" cy="14" r="12" fill="none" stroke="#CED0D6" stroke-width="2"/><path d="M14,14 H22 M14,14 V22" stroke="#CED0D6" stroke-width="0"/><path d="M16,24 V16 H24" fill="none" stroke="#CED0D6" stroke-width="2"/></svg>
<svg style="position:absolute;left:990px;top:1624px;" width="28" height="26" viewBox="0 0 28 26"><path d="M4,2.5 L24,13 L4,23.5 Z" fill="none" stroke="#5FB865" stroke-width="2.2" stroke-linejoin="round"/></svg>
<svg style="position:absolute;left:990px;top:1712px;" width="28" height="26" viewBox="0 0 28 26"><path d="M4,2.5 L24,13 L4,23.5 Z" fill="none" stroke="#5FB865" stroke-width="2.2" stroke-linejoin="round"/></svg>
<svg style="position:absolute;left:140px;top:104px;" width="24" height="24" viewBox="0 0 24 24"><circle cx="12" cy="12" r="12" fill="#FF5F57"/></svg>
<svg style="position:absolute;left:180px;top:104px;" width="24" height="24" viewBox="0 0 24 24"><circle cx="12" cy="12" r="12" fill="#FEBC2E"/></svg>
<svg style="position:absolute;left:220px;top:104px;" width="24" height="24" viewBox="0 0 24 24"><circle cx="12" cy="12" r="12" fill="#28C840"/></svg>
<div style="position:absolute;left:292px;top:96px;width:40px;height:40px;border-radius:7px;background:linear-gradient(45deg,#4C7DEA,#3A98BC)"></div>
<div style="position:absolute;left:297.5px;top:102.88px;font:normal 25px/28.75px 'Liberation Sans', sans-serif;color:#FFFFFF;white-space:pre;letter-spacing:0.5px"><span style="line-height:normal">ST</span></div>
<div style="position:absolute;left:343px;top:100.16px;font:normal 28px/32.20px 'Liberation Sans', sans-serif;color:#DFE1E5;white-space:pre;"><span style="line-height:normal">SpringTest</span></div>
<svg style="position:absolute;left:490.0px;top:111.0px;" width="20" height="12" viewBox="0 0 20 12"><path d="M2,2 L10.0,10 L18,2" fill="none" stroke="#A8ABB0" stroke-width="2" stroke-linecap="round" stroke-linejoin="round"/></svg>
<svg style="position:absolute;left:548px;top:100px;" width="30" height="34" viewBox="0 0 30 34"><circle cx="8" cy="7" r="4.6" fill="none" stroke="#CED0D6" stroke-width="2"/><circle cx="22" cy="13" r="4.6" fill="none" stroke="#CED0D6" stroke-width="2"/><path d="M8,11.6 V31 M8,27 Q8,22 14,21.5 Q20,21 21,17.6" fill="none" stroke="#CED0D6" stroke-width="2"/></svg>
<div style="position:absolute;left:593px;top:100.16px;font:normal 28px/32.20px 'Liberation Sans', sans-serif;color:#DFE1E5;white-space:pre;"><span style="line-height:normal">master</span></div>
<svg style="position:absolute;left:690.0px;top:111.0px;" width="20" height="12" viewBox="0 0 20 12"><path d="M2,2 L10.0,10 L18,2" fill="none" stroke="#A8ABB0" stroke-width="2" stroke-linecap="round" stroke-linejoin="round"/></svg>
<svg style="position:absolute;left:2908px;top:98px;" width="36" height="32" viewBox="0 0 36 32"><rect x="3" y="7" width="27" height="22" rx="3" fill="#1F2536" stroke="#3A5A99" stroke-width="2"/><path d="M8,12 H12 M15,12 H19" stroke="#3A5A99" stroke-width="1.6"/><circle cx="26.5" cy="7.5" r="5.8" fill="#5FB865"/></svg>
<div style="position:absolute;left:2953px;top:101.16px;font:normal 28px/32.20px 'Liberation Sans', sans-serif;color:#DFE1E5;white-space:pre;"><span style="line-height:normal">Main</span></div>
<svg style="position:absolute;left:3022.0px;top:112.0px;" width="20" height="12" viewBox="0 0 20 12"><path d="M2,2 L10.0,10 L18,2" fill="none" stroke="#A8ABB0" stroke-width="2" stroke-linecap="round" stroke-linejoin="round"/></svg>
<div style="position:absolute;left:3068px;top:86px;width:60px;height:60px;background:#4F8C57;border-radius:12px"></div>
<svg style="position:absolute;left:3078px;top:96px;" width="40" height="40" viewBox="0 0 40 40"><path d="M21,8.6 A12,12 0 1 0 14,31" fill="none" stroke="#FFFFFF" stroke-width="2.4" stroke-linecap="round"/><path d="M19.5,3 L25,8.8 L18.5,13.5" fill="none" stroke="#FFFFFF" stroke-width="2.4" stroke-linecap="round" stroke-linejoin="round"/><path d="M19.5,22 L32,28.5 L19.5,35 Z" fill="none" stroke="#FFFFFF" stroke-width="2.4" stroke-linejoin="round"/></svg>
<svg style="position:absolute;left:3148px;top:98px;" width="36" height="36" viewBox="0 0 36 36"><path d="M11,10 Q18,2 25,10" fill="none" stroke="#5FB865" stroke-width="2.4"/><ellipse cx="18" cy="20" rx="8.5" ry="10" fill="none" stroke="#5FB865" stroke-width="2.6"/><path d="M3,20 H9.5 M26.5,20 H33 M5,11 L10.5,14 M31,11 L25.5,14 M5,30 L10.5,26 M31,30 L25.5,26" stroke="#5FB865" stroke-width="2.4" stroke-linecap="round"/></svg>
<div style="position:absolute;left:3204px;top:86px;width:60px;height:60px;background:#C94A4A;border-radius:12px"></div>
<div style="position:absolute;left:3221px;top:103px;width:26px;height:26px;border:2.6px solid #F0F1F2;border-radius:4px;box-sizing:border-box"></div>
<svg style="position:absolute;left:3297px;top:100px;" width="10" height="32" viewBox="0 0 10 32"><circle cx="5" cy="5" r="2.8" fill="#CED0D6"/><circle cx="5" cy="16" r="2.8" fill="#CED0D6"/><circle cx="5" cy="27" r="2.8" fill="#CED0D6"/></svg>
<svg style="position:absolute;left:3390px;top:96px;" width="40" height="42" viewBox="0 0 40 42"><circle cx="18" cy="10" r="7.2" fill="none" stroke="#CED0D6" stroke-width="2.6"/><path d="M6,34.5 Q5,22 18,21.5 Q22,21.5 24.5,23" fill="none" stroke="#CED0D6" stroke-width="2.6" stroke-linecap="round"/><path d="M6,34.5 H15" stroke="#CED0D6" stroke-width="2.6" stroke-linecap="round"/><path d="M21,31.5 H37.5 M29.5,23.5 V39.5" stroke="#CED0D6" stroke-width="2.6" stroke-linecap="round"/></svg>
<svg style="position:absolute;left:3468px;top:96px;" width="40" height="40" viewBox="0 0 40 40"><circle cx="18" cy="18" r="12.5" fill="none" stroke="#CED0D6" stroke-width="2.8"/><path d="M27.5,27.5 L36.5,36.5" stroke="#CED0D6" stroke-width="2.8" stroke-linecap="round"/></svg>
<svg style="position:absolute;left:3548px;top:96px;" width="40" height="40" viewBox="0 0 40 40"><polygon points="36.60,20.00 36.54,21.45 36.35,22.88 33.52,23.62 30.71,23.90 30.33,24.82 29.87,25.70 29.34,26.54 28.73,27.33 29.90,29.90 30.67,32.72 29.52,33.60 28.30,34.38 27.02,35.04 25.68,35.60 23.62,33.52 21.98,31.23 20.99,31.36 20.00,31.40 19.01,31.36 18.02,31.23 16.38,33.52 14.32,35.60 12.98,35.04 11.70,34.38 10.48,33.60 9.33,32.72 10.10,29.90 11.27,27.33 10.66,26.54 10.13,25.70 9.67,24.82 9.29,23.90 6.48,23.62 3.65,22.88 3.46,21.45 3.40,20.00 3.46,18.55 3.65,17.12 6.48,16.38 9.29,16.10 9.67,15.18 10.13,14.30 10.66,13.46 11.27,12.67 10.10,10.10 9.33,7.28 10.48,6.40 11.70,5.62 12.98,4.96 14.32,4.40 16.38,6.48 18.02,8.77 19.01,8.64 20.00,8.60 20.99,8.64 21.98,8.77 23.62,6.48 25.68,4.40 27.02,4.96 28.30,5.62 29.52,6.40 30.67,7.28 29.90,10.10 28.73,12.67 29.34,13.46 29.87,14.30 30.33,15.18 30.71,16.10 33.52,16.38 36.35,17.12 36.54,18.55" fill="none" stroke="#CED0D6" stroke-width="2.6" stroke-linejoin="round"/><circle cx="20" cy="20" r="5.8" fill="none" stroke="#CED0D6" stroke-width="2.6"/><circle cx="33" cy="7" r="9" fill="#26272A"/><circle cx="33" cy="7" r="6.9" fill="#F2C55C"/></svg>
<div style="position:absolute;left:122px;top:168px;width:60px;height:60px;background:#3F4044;border-radius:10px"></div>
<svg style="position:absolute;left:132px;top:181px;" width="40" height="34" viewBox="0 0 40 34"><path d="M3,5.5 Q3,2 6.5,2 H15 L20,7 H33 Q37,7 37,11 V28 Q37,31.5 33.5,31.5 H6.5 Q3,31.5 3,28 Z" fill="none" stroke="#CED0D6" stroke-width="2.6" stroke-linejoin="round"/></svg>
<svg style="position:absolute;left:130px;top:266px;" width="46" height="24" viewBox="0 0 46 24"><circle cx="23" cy="12" r="7.3" fill="none" stroke="#CED0D6" stroke-width="2.6"/><path d="M2,12 H15.5 M30.5,12 H44" stroke="#CED0D6" stroke-width="2.6" stroke-linecap="round"/></svg>
<svg style="position:absolute;left:131px;top:338px;" width="44" height="44" viewBox="0 0 44 44"><circle cx="13" cy="10" r="6.5" fill="none" stroke="#CED0D6" stroke-width="2.6"/><path d="M20,9 Q21,3.5 26,3.5 Q31.5,3.5 32,9" fill="none" stroke="#CED0D6" stroke-width="2.6"/><path d="M13,17 Q1,18 2.5,27 Q4,32 14,34" fill="none" stroke="#CED0D6" stroke-width="2.8" stroke-linecap="round"/><path d="M4,24 Q3,30 10,33 L14,34" fill="#CED0D6"/><circle cx="28" cy="25" r="11" fill="#CED0D6"/><path d="M24.5,22 Q24.5,18.5 28,18.5 Q31.5,18.5 31.5,21.8 Q31.5,24 28.5,25.3 V27" fill="none" stroke="#26272A" stroke-width="2.6" stroke-linecap="round"/><circle cx="28.5" cy="31" r="1.7" fill="#26272A"/></svg>
<div style="position:absolute;left:128px;top:408px;width:48px;height:2px;background:#3C3F44"></div>
<svg style="position:absolute;left:133px;top:441px;" width="40" height="40" viewBox="0 0 40 40"><rect x="4" y="3.5" width="13" height="12.5" rx="2.5" fill="none" stroke="#CED0D6" stroke-width="2.6"/><rect x="4" y="21.5" width="13" height="12.5" rx="2.5" fill="none" stroke="#CED0D6" stroke-width="2.6"/><rect x="22" y="21.5" width="13" height="12.5" rx="2.5" fill="none" stroke="#CED0D6" stroke-width="2.6"/></svg>
<svg style="position:absolute;left:135px;top:536px;" width="8" height="8" viewBox="0 0 8 8"><circle cx="4" cy="4" r="3.2" fill="#CED0D6"/></svg>
<svg style="position:absolute;left:148px;top:536px;" width="8" height="8" viewBox="0 0 8 8"><circle cx="4" cy="4" r="3.2" fill="#CED0D6"/></svg>
<svg style="position:absolute;left:161px;top:536px;" width="8" height="8" viewBox="0 0 8 8"><circle cx="4" cy="4" r="3.2" fill="#CED0D6"/></svg>
<svg style="position:absolute;left:128px;top:2272px;" width="48" height="48" viewBox="0 0 48 48"><circle cx="17" cy="8" r="4.5" fill="#5FAEE0"/><circle cx="40" cy="8" r="4.5" fill="#5FAEE0"/><rect x="12" y="5" width="33" height="39" rx="13" fill="#7CC4EC"/><circle cx="22.5" cy="15.5" r="5.2" fill="#F4F6F8"/><circle cx="35" cy="15.5" r="5.2" fill="#F4F6F8"/><circle cx="23.5" cy="16.5" r="2.2" fill="#2A2A2A"/><circle cx="34" cy="16.5" r="2.2" fill="#2A2A2A"/><ellipse cx="28.8" cy="23" rx="3" ry="2.2" fill="#B99A80"/><path d="M2,22.5 L13,19.5 L24,22.5 V32 Q24,41 13,46 Q2,41 2,32 Z" fill="#2FBF5A"/><path d="M8,32 L12,35.5 L18,28" fill="none" stroke="#E8F7EC" stroke-width="2.2"/></svg>
<svg style="position:absolute;left:130px;top:2352px;" width="44" height="44" viewBox="0 0 44 44"><path d="M5,5.5 H21 Q33,6 39.5,17 Q32,12.5 25,13.5 V17 H16 V13.5 H5 Z" fill="none" stroke="#CED0D6" stroke-width="2.4" stroke-linejoin="round"/><path d="M16,17 H25 V39 Q25,41 23,41 H18 Q16,41 16,39 Z" fill="none" stroke="#CED0D6" stroke-width="2.4" stroke-linejoin="round"/></svg>
<svg style="position:absolute;left:131px;top:2437px;" width="42" height="38" viewBox="0 0 42 38"><path d="M11.5,3 H30.5 L39.5,19 L30.5,35 H11.5 L2.5,19 Z" fill="none" stroke="#CED0D6" stroke-width="2.4" stroke-linejoin="round"/><path d="M16.5,11.5 L28,19 L16.5,26.5 Z" fill="none" stroke="#CED0D6" stroke-width="2.4" stroke-linejoin="round"/></svg>
<div style="position:absolute;left:137px;top:2521px;width:31px;height:30px;background:#5A5D62;border-radius:4px"></div>
<svg style="position:absolute;left:137px;top:2521px;" width="31" height="30" viewBox="0 0 31 30"><path d="M12,7 H8 V23 H12 M19,7 H23 V23 H19" fill="none" stroke="#2F3135" stroke-width="3"/></svg>
<div style="position:absolute;left:122px;top:2586px;width:60px;height:60px;background:#3F4044;border-radius:10px"></div>
<svg style="position:absolute;left:133px;top:2596px;" width="44" height="42" viewBox="0 0 44 42"><path d="M8,5 L33,20 L8,35 Z" fill="none" stroke="#CED0D6" stroke-width="2.6" stroke-linejoin="round"/><circle cx="31" cy="8" r="6.5" fill="#5FB865"/></svg>
<svg style="position:absolute;left:131px;top:2676px;" width="44" height="40" viewBox="0 0 44 40"><rect x="4" y="3" width="35" height="31" rx="3" fill="none" stroke="#CED0D6" stroke-width="2.6"/><path d="M10,11 L16,16 L10,21 M17,24.5 H27" fill="none" stroke="#CED0D6" stroke-width="2.6" stroke-linecap="round" stroke-linejoin="round"/></svg>
<svg style="position:absolute;left:131px;top:2756px;" width="42" height="42" viewBox="0 0 42 42"><circle cx="21" cy="21" r="17.5" fill="none" stroke="#CED0D6" stroke-width="2.6"/><path d="M21,11 V23" stroke="#CED0D6" stroke-width="3" stroke-linecap="round"/><circle cx="21" cy="29.5" r="2.2" fill="#CED0D6"/></svg>
<svg style="position:absolute;left:131px;top:2836px;" width="42" height="40" viewBox="0 0 42 40"><circle cx="8" cy="7" r="5" fill="none" stroke="#CED0D6" stroke-width="2.6"/><circle cx="24" cy="13" r="5" fill="none" stroke="#CED0D6" stroke-width="2.6"/><path d="M8,12 V37 M8,29 Q8,24 15,24 Q23,24 23,18" fill="none" stroke="#CED0D6" stroke-width="2.6"/></svg>
<svg style="position:absolute;left:3548px;top:176px;" width="40" height="42" viewBox="0 0 40 42"><path d="M9,29 Q11,27 11,22 V16 Q11,7 20,7 Q29,7 29,16 V22 Q29,27 31,29 Z" fill="none" stroke="#CED0D6" stroke-width="2.6" stroke-linejoin="round"/><path d="M6,29 H34" stroke="#CED0D6" stroke-width="2.6" stroke-linecap="round"/><path d="M16,33 H24 Q22,37 20,37 Q18,37 16,33 Z" fill="#CED0D6"/><circle cx="33" cy="8.5" r="8" fill="#26272A"/><circle cx="33" cy="8.5" r="6.5" fill="#E05555"/></svg>
<svg style="position:absolute;left:3548px;top:258px;" width="40" height="40" viewBox="0 0 40 40"><ellipse cx="20" cy="9" rx="15" ry="5.5" fill="none" stroke="#CED0D6" stroke-width="2.6"/><path d="M5,9 V30 Q5,36 20,36 Q35,36 35,30 V9 M5,16 Q5,22 20,22 Q35,22 35,16 M5,23 Q5,29 20,29 Q35,29 35,23" fill="none" stroke="#CED0D6" stroke-width="2.6"/></svg>
<svg style="position:absolute;left:3540px;top:330px" width="56.0" height="56.0" viewBox="0 0 56 56"><ellipse cx="28" cy="35" rx="19" ry="10" fill="#CED0D6"/><path d="M16,27 H40 V38.5 Q28,43 16,38.5 Z" fill="#26272A"/><rect x="14.2" y="12.5" width="12.4" height="13.7" rx="6" fill="#26272A" stroke="#CED0D6" stroke-width="3"/><rect x="29.4" y="12.5" width="12.4" height="13.7" rx="6" fill="#26272A" stroke="#CED0D6" stroke-width="3"/><rect x="22" y="30" width="3.7" height="7.7" rx="1.85" fill="#CED0D6"/><rect x="30.2" y="30" width="3.7" height="7.7" rx="1.85" fill="#CED0D6"/></svg>
<div style="position:absolute;left:3547px;top:410px;display:none"></div>
<div style="position:absolute;left:3548px;top:408.46px;font:normal 47px/54.05px 'Liberation Sans', sans-serif;color:#CED0D6;white-space:pre;font-style:italic;letter-spacing:-2px"><span style="line-height:normal">m</span></div>
<svg style="position:absolute;left:3548px;top:497px;" width="40" height="40" viewBox="0 0 40 40"><defs><linearGradient id="msg" x1="0" y1="0" x2="0" y2="1"><stop offset="0" stop-color="#2D9CFF"/><stop offset="1" stop-color="#1A6BFF"/></linearGradient></defs><path d="M20,3 Q36,3 36,19 Q36,35 20,35 Q15,35 11,33 L4,36 L7,29 Q4,25 4,19 Q4,3 20,3 Z" fill="url(#msg)"/><circle cx="16" cy="19" r="2" fill="#0A1A40"/><circle cx="24" cy="19" r="2" fill="#0A1A40"/></svg>
<svg style="position:absolute;left:3540px;top:570px" width="56.0" height="56.0" viewBox="0 0 56 56"><ellipse cx="28" cy="35" rx="19" ry="10" fill="#CED0D6"/><path d="M16,27 H40 V38.5 Q28,43 16,38.5 Z" fill="#26272A"/><rect x="14.2" y="12.5" width="12.4" height="13.7" rx="6" fill="#26272A" stroke="#CED0D6" stroke-width="3"/><rect x="29.4" y="12.5" width="12.4" height="13.7" rx="6" fill="#26272A" stroke="#CED0D6" stroke-width="3"/><rect x="22" y="30" width="3.7" height="7.7" rx="1.85" fill="#CED0D6"/><path d="M29,26.5 H47 Q49.5,26.5 49.5,29 V41 Q49.5,44 47,44 H45 V49 L39,44 H29.5 Q27,44 27,41 V29 Q27,26.5 29,26.5 Z" fill="#26272A"/><path d="M31.8,28 H44.8 Q47,28 47,30.2 V40 Q47,42.3 44.8,42.3 H43 V46.9 L37.7,42.3 H31.8 Q29.5,42.3 29.5,40 V30.2 Q29.5,28 31.8,28 Z" fill="#CED0D6"/></svg>
<div style="position:absolute;left:194px;top:2098px;width:3332px;height:2px;background:#1B1C1E"></div>
<div style="position:absolute;left:219px;top:2124.36px;font:bold 28px/32.20px 'Liberation Sans', sans-serif;color:#DFE1E5;white-space:pre;"><span style="line-height:normal">Run</span></div>
<svg style="position:absolute;left:322px;top:2122px;" width="38" height="34" viewBox="0 0 38 34"><rect x="3" y="7" width="27" height="23" rx="3.5" fill="#1F2A45" stroke="#548AF7" stroke-width="2.2"/><path d="M8,12.5 H12.5 M15.5,12.5 H20" stroke="#548AF7" stroke-width="1.8"/><circle cx="26.5" cy="7.5" r="6.5" fill="#26272A"/><circle cx="26.5" cy="7.5" r="5.5" fill="#5FB865"/></svg>
<div style="position:absolute;left:363px;top:2124.36px;font:normal 28px/32.20px 'Liberation Sans', sans-serif;color:#DFE1E5;white-space:pre;"><span style="line-height:normal">Main</span></div>
<svg style="position:absolute;left:445px;top:2133px;" width="18" height="18" viewBox="0 0 18 18"><path d="M2,2 L16,16 M16,2 L2,16" stroke="#8C8F94" stroke-width="2" stroke-linecap="round"/></svg>
<div style="position:absolute;left:298px;top:2176px;width:186px;height:6px;background:#4E5157;border-radius:3px"></div>
<div style="position:absolute;left:194px;top:2180px;width:3332px;height:2px;background:#1B1C1E"></div>
<svg style="position:absolute;left:202px;top:2198px;" width="40" height="40" viewBox="0 0 40 40"><path d="M17.5,6 A11.5,11.5 0 1 0 12,28" fill="none" stroke="#CED0D6" stroke-width="2.2"/><path d="M12,6 H28 M28,6 V0 M22,0 L28,6 L22,12" fill="none" stroke="#CED0D6" stroke-width="0"/><path d="M16,6.5 H29.5 V0" fill="none" stroke="#CED0D6" stroke-width="2.2"/><path d="M24.5,13.5 L29.5,6.5" stroke="#CED0D6" stroke-width="0"/><path d="M12,18 L24.5,25.5 L12,33 Z" fill="#253627" stroke="#5FB865" stroke-width="2.2" stroke-linejoin="round"/></svg>
<div style="position:absolute;left:260px;top:2204px;width:24px;height:24px;background:#4D2A2B;border:2.2px solid #E55B5B;border-radius:4px;box-sizing:border-box"></div>
<div style="position:absolute;left:304px;top:2197px;width:2px;height:39px;background:#43454A"></div>
<svg style="position:absolute;left:322px;top:2200px;" width="32" height="32" viewBox="0 0 32 32"><path d="M3,9 Q3,7 5,7 H10 L12.5,3 H19.5 L22,7 H27 Q29,7 29,9 V26 Q29,28 27,28 H5 Q3,28 3,26 Z" fill="none" stroke="#CED0D6" stroke-width="2.2" stroke-linejoin="round"/><circle cx="15.5" cy="17" r="5.5" fill="none" stroke="#CED0D6" stroke-width="2.2"/><circle cx="24" cy="12" r="1.3" fill="#CED0D6"/></svg>
<svg style="position:absolute;left:375px;top:2200px;" width="34" height="34" viewBox="0 0 34 34"><path d="M10,10 V4 Q10,2 12,2 H27 Q29,2 29,4 V26 Q29,28 27,28 H12 Q10,28 10,26 V20" fill="none" stroke="#CED0D6" stroke-width="2.2"/><path d="M2,15 H21 M15,9 L21,15 L15,21" fill="none" stroke="#E55B5B" stroke-width="2.2" stroke-linejoin="round"/></svg>
<svg style="position:absolute;left:426px;top:2202px;" width="36" height="32" viewBox="0 0 36 32"><path d="M3,24 A15,15 0 1 1 33,24 Z" fill="none" stroke="#CED0D6" stroke-width="2.2" stroke-linejoin="round"/><circle cx="15" cy="16" r="2.6" fill="none" stroke="#CED0D6" stroke-width="2"/><path d="M17,14 L24,8" stroke="#CED0D6" stroke-width="2.2" stroke-linecap="round"/><path d="M34,20 V30 H24 Z" fill="#CED0D6"/></svg>
<svg style="position:absolute;left:489px;top:2201px;" width="10" height="30" viewBox="0 0 10 30"><circle cx="5" cy="5" r="2.6" fill="#CED0D6"/><circle cx="5" cy="15" r="2.6" fill="#CED0D6"/><circle cx="5" cy="25" r="2.6" fill="#CED0D6"/></svg>
<div style="position:absolute;left:194px;top:2252px;width:3332px;height:645px;background:#1C1D1F"></div>
<div style="position:absolute;left:194px;top:2252px;width:64px;height:645px;background:#26272A"></div>
<div style="position:absolute;left:194px;top:2250px;width:3332px;height:2px;background:#1B1C1E"></div>
<div style="position:absolute;left:3498px;top:2251px;width:28px;height:646px;background:#303236"></div>
<div style="position:absolute;left:282px;top:2252px;width:1357px;height:44px;background:#36373B"></div>
<div class="cl" style="left:282px;top:2262.34px;color:#8C8F94">/Users/eve/Library/Java/JavaVirtualMachines/corretto-17.0.11/Contents/Home/bin/java ...</div>
<div class="cl" style="left:282px;top:2306.34px;color:#F75464">May 30, 2024 4:37:03 PM org.springframework.scheduling.annotation.ScheduledAnnotationBeanPostProcessor finishRegistration</div>
<div class="cl" style="left:282px;top:2350.34px;color:#F75464">INFO: No TaskScheduler/ScheduledExecutorService bean found for scheduled processing</div>
<div class="cl" style="left:282px;top:2394.34px;color:#BCBEC4">I am a scheduled taskThu May 30 16:37:03 CDT 2024</div>
<div class="cl" style="left:282px;top:2438.34px;color:#BCBEC4">I am a scheduled taskThu May 30 16:37:04 CDT 2024</div>
<div class="cl" style="left:282px;top:2482.34px;color:#BCBEC4">I am a scheduled taskThu May 30 16:37:06 CDT 2024</div>
<div class="cl" style="left:282px;top:2526.34px;color:#BCBEC4">I am a scheduled taskThu May 30 16:37:08 CDT 2024</div>
<div class="cl" style="left:282px;top:2570.34px;color:#BCBEC4">I am a scheduled taskThu May 30 16:37:10 CDT 2024</div>
<svg style="position:absolute;left:212px;top:2276px;" width="28" height="30" viewBox="0 0 28 30"><path d="M14,4 V27 M5,13 L14,4 L23,13" fill="none" stroke="#5A5D63" stroke-width="2.2" stroke-linecap="round" stroke-linejoin="round"/></svg>
<svg style="position:absolute;left:212px;top:2330px;" width="28" height="30" viewBox="0 0 28 30"><path d="M14,3 V26 M5,17 L14,26 L23,17" fill="none" stroke="#5A5D63" stroke-width="2.2" stroke-linecap="round" stroke-linejoin="round"/></svg>
<svg style="position:absolute;left:210px;top:2381px;" width="34" height="32" viewBox="0 0 34 32"><path d="M3,4 H30 M3,13 H24 Q30,13 30,19 Q30,25 24,25 H15 M19,20 L14,25 L19,30 M3,22 H9 M3,29 H10" fill="none" stroke="#CED0D6" stroke-width="2.2" stroke-linecap="round" stroke-linejoin="round"/></svg>
<div style="position:absolute;left:204px;top:2426px;width:44px;height:44px;background:#3F4044;border-radius:6px"></div>
<svg style="position:absolute;left:210px;top:2432px;" width="34" height="32" viewBox="0 0 34 32"><path d="M3,5 H13 M3,13 H13 M3,27 H30 M22,3 V21 M15,14 L22,21 L29,14" fill="none" stroke="#CED0D6" stroke-width="2.2" stroke-linecap="round" stroke-linejoin="round"/></svg>
<svg style="position:absolute;left:210px;top:2484px;" width="34" height="32" viewBox="0 0 34 32"><path d="M9,11 V4 H25 V11 M9,23 H4 V13 Q4,11 6,11 H28 Q30,11 30,13 V23 H25 M9,18 H25 V29 H9 Z" fill="none" stroke="#CED0D6" stroke-width="2.2" stroke-linejoin="round"/></svg>
<svg style="position:absolute;left:211px;top:2534px;" width="32" height="34" viewBox="0 0 32 34"><path d="M3,8 H29 M11,8 V4 H21 V8 M6,8 L7.5,30 H24.5 L26,8 M13,13 V25 M19,13 V25" fill="none" stroke="#CED0D6" stroke-width="2.2" stroke-linejoin="round"/></svg>
<svg style="position:absolute;left:138px;top:2917px;" width="20" height="20" viewBox="0 0 20 20"><rect x="2" y="2" width="15" height="15" rx="3" fill="#1F2A45" stroke="#548AF7" stroke-width="2.2"/></svg>
<div style="position:absolute;left:164.6px;top:2908.66px;font:normal 28px/32.20px 'Liberation Sans', sans-serif;color:#A9ACB2;white-space:pre;"><span style="line-height:normal">SpringTest</span></div>
<div style="position:absolute;left:348.6px;top:2908.66px;font:normal 28px/32.20px 'Liberation Sans', sans-serif;color:#A9ACB2;white-space:pre;"><span style="line-height:normal">src</span></div>
<div style="position:absolute;left:434px;top:2908.66px;font:normal 28px/32.20px 'Liberation Sans', sans-serif;color:#A9ACB2;white-space:pre;"><span style="line-height:normal">main</span></div>
<div style="position:absolute;left:541.7px;top:2908.66px;font:normal 28px/32.20px 'Liberation Sans', sans-serif;color:#A9ACB2;white-space:pre;"><span style="line-height:normal">java</span></div>
<div style="position:absolute;left:640px;top:2908.66px;font:normal 28px/32.20px 'Liberation Sans', sans-serif;color:#A9ACB2;white-space:pre;"><span style="line-height:normal">org</span></div>
<div style="position:absolute;left:730.3px;top:2908.66px;font:normal 28px/32.20px 'Liberation Sans', sans-serif;color:#A9ACB2;white-space:pre;"><span style="line-height:normal">example</span></div>
<div style="position:absolute;left:881.7px;top:2908.66px;font:normal 28px/32.20px 'Liberation Sans', sans-serif;color:#A9ACB2;white-space:pre;"><span style="line-height:normal">entity</span></div>
<svg style="position:absolute;left:317.2px;top:2917.0px;" width="11" height="18" viewBox="0 0 11 18"><path d="M2,2 L9,9.0 L2,16" fill="none" stroke="#A9ACB2" stroke-width="2" stroke-linecap="round" stroke-linejoin="round"/></svg>
<svg style="position:absolute;left:403.1px;top:2917.0px;" width="11" height="18" viewBox="0 0 11 18"><path d="M2,2 L9,9.0 L2,16" fill="none" stroke="#A9ACB2" stroke-width="2" stroke-linecap="round" stroke-linejoin="round"/></svg>
<svg style="position:absolute;left:511.70000000000005px;top:2917.0px;" width="11" height="18" viewBox="0 0 11 18"><path d="M2,2 L9,9.0 L2,16" fill="none" stroke="#A9ACB2" stroke-width="2" stroke-linecap="round" stroke-linejoin="round"/></svg>
<svg style="position:absolute;left:609.0px;top:2917.0px;" width="11" height="18" viewBox="0 0 11 18"><path d="M2,2 L9,9.0 L2,16" fill="none" stroke="#A9ACB2" stroke-width="2" stroke-linecap="round" stroke-linejoin="round"/></svg>
<svg style="position:absolute;left:699.8px;top:2917.0px;" width="11" height="18" viewBox="0 0 11 18"><path d="M2,2 L9,9.0 L2,16" fill="none" stroke="#A9ACB2" stroke-width="2" stroke-linecap="round" stroke-linejoin="round"/></svg>
<svg style="position:absolute;left:851.3px;top:2917.0px;" width="11" height="18" viewBox="0 0 11 18"><path d="M2,2 L9,9.0 L2,16" fill="none" stroke="#A9ACB2" stroke-width="2" stroke-linecap="round" stroke-linejoin="round"/></svg>
<svg style="position:absolute;left:969.7px;top:2917.0px;" width="11" height="18" viewBox="0 0 11 18"><path d="M2,2 L9,9.0 L2,16" fill="none" stroke="#A9ACB2" stroke-width="2" stroke-linecap="round" stroke-linejoin="round"/></svg>
<svg style="position:absolute;left:1001px;top:2912px;" width="29" height="29" viewBox="0 0 29 29"><circle cx="14.5" cy="14.5" r="13.5" fill="#25324D" stroke="#548AF7" stroke-width="2"/><path d="M19.7,10.9 A6.2,6.2 0 1 0 19.7,18.1" fill="none" stroke="#548AF7" stroke-width="1.8"/></svg>
<div style="position:absolute;left:1040px;top:2908.66px;font:normal 28px/32.20px 'Liberation Sans', sans-serif;color:#A9ACB2;white-space:pre;"><span style="line-height:normal">Student</span></div>
<svg style="position:absolute;left:3008px;top:2910px;" width="32" height="34" viewBox="0 0 32 34"><defs><linearGradient id="vg" x1="0" y1="0" x2="1" y2="1"><stop offset="0" stop-color="#21D789"/><stop offset="1" stop-color="#087CFA"/></linearGradient></defs><path d="M3,3 H10 L13,23 L23,3 H30 L15,32 H8 Z" fill="url(#vg)"/></svg>
<div style="position:absolute;left:3073px;top:2908.66px;font:normal 28px/32.20px 'Liberation Sans', sans-serif;color:#A9ACB2;white-space:pre;"><span style="line-height:normal">25:2</span></div>
<div style="position:absolute;left:3159px;top:2908.66px;font:normal 28px/32.20px 'Liberation Sans', sans-serif;color:#A9ACB2;white-space:pre;"><span style="line-height:normal">LF</span></div>
<div style="position:absolute;left:3220px;top:2908.66px;font:normal 28px/32.20px 'Liberation Sans', sans-serif;color:#A9ACB2;white-space:pre;"><span style="line-height:normal">UTF-8</span></div>
<svg style="position:absolute;left:3326px;top:2905px" width="42.6" height="42.6" viewBox="0 0 56 56"><ellipse cx="28" cy="35" rx="19" ry="10" fill="#A9ACB2"/><path d="M16,27 H40 V38.5 Q28,43 16,38.5 Z" fill="#26272A"/><rect x="14.2" y="12.5" width="12.4" height="13.7" rx="6" fill="#26272A" stroke="#A9ACB2" stroke-width="3"/><rect x="29.4" y="12.5" width="12.4" height="13.7" rx="6" fill="#26272A" stroke="#A9ACB2" stroke-width="3"/><rect x="22" y="30" width="3.7" height="7.7" rx="1.85" fill="#A9ACB2"/><rect x="30.2" y="30" width="3.7" height="7.7" rx="1.85" fill="#A9ACB2"/></svg>
<div style="position:absolute;left:3397px;top:2908.66px;font:normal 28px/32.20px 'Liberation Sans', sans-serif;color:#A9ACB2;white-space:pre;"><span style="line-height:normal">4 spaces</span></div>
<svg style="position:absolute;left:3542px;top:2908px;" width="34" height="34" viewBox="0 0 34 34"><rect x="3" y="15" width="20" height="16" rx="3" fill="none" stroke="#A9ACB2" stroke-width="2.4"/><path d="M13,20 V25" stroke="#A9ACB2" stroke-width="2.4" stroke-linecap="round"/><path d="M18,15 V11 Q18,6 24,6 Q30,6 30,11 V14" fill="none" stroke="#A9ACB2" stroke-width="2.4" stroke-linecap="round"/></svg>
</div></div>
<div style="position:absolute;left:112px;top:76px;width:3496px;height:2880px;border-radius:22px;box-sizing:border-box;border:2px solid rgba(255,255,255,0.27);pointer-events:none"></div>
</body></html>
